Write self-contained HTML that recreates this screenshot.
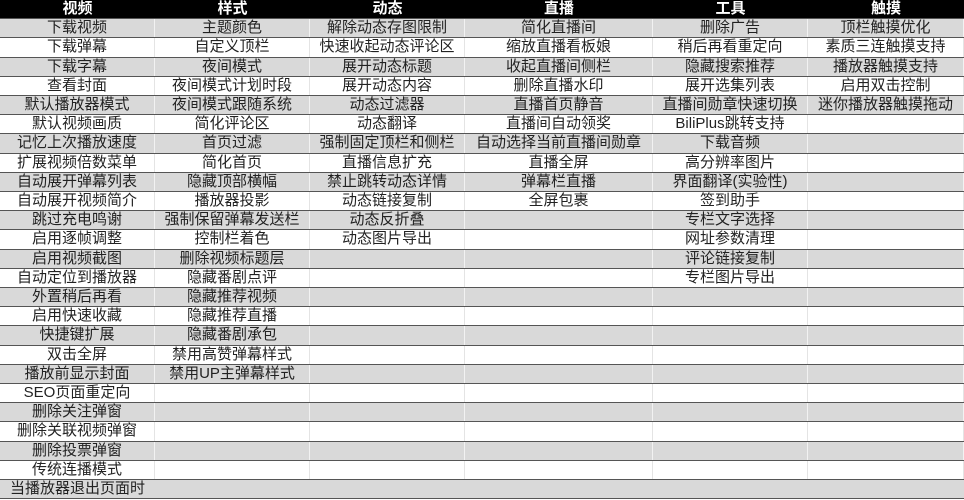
<!DOCTYPE html>
<html><head><meta charset="utf-8"><style>
body{margin:0;width:964px;height:500px;overflow:hidden;background:#fff;font-family:"Liberation Sans","Noto Sans CJK SC",sans-serif;}
.r{position:absolute;left:0;width:964px;height:19.2px;border-bottom:1px solid #555;box-sizing:border-box;}
.c{position:absolute;top:0;height:100%;text-align:center;font-size:15px;line-height:18px;color:#222;white-space:nowrap;border-right:1px solid #e4e4e4;box-sizing:border-box;}
.h{background:#000;}
.h .c{color:#fff;font-weight:bold;border-right:none;}
.g{background:#d9d9d9;}
.g .c{border-right:1px solid #f2f2f2;}
</style></head><body>
<div id="t"></div>
<script>
var cols=[[0,155],[155,310],[310,465],[465,653],[653,808],[808,964]];
var data=[
["视频","样式","动态","直播","工具","触摸"],
["下载视频","主题颜色","解除动态存图限制","简化直播间","删除广告","顶栏触摸优化"],
["下载弹幕","自定义顶栏","快速收起动态评论区","缩放直播看板娘","稍后再看重定向","素质三连触摸支持"],
["下载字幕","夜间模式","展开动态标题","收起直播间侧栏","隐藏搜索推荐","播放器触摸支持"],
["查看封面","夜间模式计划时段","展开动态内容","删除直播水印","展开选集列表","启用双击控制"],
["默认播放器模式","夜间模式跟随系统","动态过滤器","直播首页静音","直播间勋章快速切换","迷你播放器触摸拖动"],
["默认视频画质","简化评论区","动态翻译","直播间自动领奖","BiliPlus跳转支持",""],
["记忆上次播放速度","首页过滤","强制固定顶栏和侧栏","自动选择当前直播间勋章","下载音频",""],
["扩展视频倍数菜单","简化首页","直播信息扩充","直播全屏","高分辨率图片",""],
["自动展开弹幕列表","隐藏顶部横幅","禁止跳转动态详情","弹幕栏直播","界面翻译(实验性)",""],
["自动展开视频简介","播放器投影","动态链接复制","全屏包裹","签到助手",""],
["跳过充电鸣谢","强制保留弹幕发送栏","动态反折叠","","专栏文字选择",""],
["启用逐帧调整","控制栏着色","动态图片导出","","网址参数清理",""],
["启用视频截图","删除视频标题层","","","评论链接复制",""],
["自动定位到播放器","隐藏番剧点评","","","专栏图片导出",""],
["外置稍后再看","隐藏推荐视频","","","",""],
["启用快速收藏","隐藏推荐直播","","","",""],
["快捷键扩展","隐藏番剧承包","","","",""],
["双击全屏","禁用高赞弹幕样式","","","",""],
["播放前显示封面","禁用UP主弹幕样式","","","",""],
["SEO页面重定向","","","","",""],
["删除关注弹窗","","","","",""],
["删除关联视频弹窗","","","","",""],
["删除投票弹窗","","","","",""],
["传统连播模式","","","","",""],
["当播放器退出页面时","","","","",""]];
var h="";
for(var i=0;i<data.length;i++){
 var cls=i==0?"r h":(i%2==1?"r g":"r");
 h+='<div class="'+cls+'" style="top:'+(i*19.2).toFixed(1)+'px">';
 for(var j=0;j<6;j++){
  var s='left:'+cols[j][0]+'px;width:'+(cols[j][1]-cols[j][0])+'px;';
  if(i==25&&j==0)s+='text-align:left;padding-left:10px;border-right:none;';
  if(i==25&&j>0)s+='border-right:none;';
  h+='<div class="c" style="'+s+'">'+data[i][j]+'</div>';
 }
 h+='</div>';
}
document.getElementById("t").innerHTML=h;
</script>
</body></html>
